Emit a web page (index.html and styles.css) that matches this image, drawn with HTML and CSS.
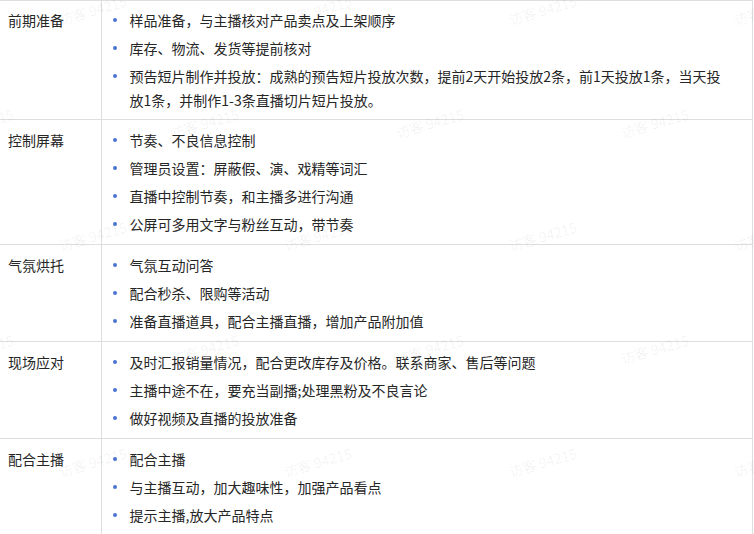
FILE: index.html
```html
<!DOCTYPE html>
<html lang="zh-CN">
<head>
  <meta charset="UTF-8" />
  <meta name="viewport" content="width=device-width, initial-scale=1.0"/>
  <title>直播分工</title>
  <link rel="stylesheet" href="styles.css">
</head>
<body>

  <div class="page">
    <table class="duty-table">
      <colgroup>
        <col class="col-label">
        <col>
      </colgroup>
      <tr class="first">
        <td class="label">前期准备</td>
        <td>
          <ul class="points">
            <li>样品准备，与主播核对产品卖点及上架顺序</li>
            <li>库存、物流、发货等提前核对</li>
            <li>预告短片制作并投放：成熟的预告短片投放次数，提前2天开始投放2条，前1天投放1条，当天投放1条，并制作1-3条直播切片短片投放。</li>
          </ul>
        </td>
      </tr>
      <tr>
        <td class="label">控制屏幕</td>
        <td>
          <ul class="points">
            <li>节奏、不良信息控制</li>
            <li>管理员设置：屏蔽假、演、戏精等词汇</li>
            <li>直播中控制节奏，和主播多进行沟通</li>
            <li>公屏可多用文字与粉丝互动，带节奏</li>
          </ul>
        </td>
      </tr>
      <tr>
        <td class="label">气氛烘托</td>
        <td>
          <ul class="points">
            <li>气氛互动问答</li>
            <li>配合秒杀、限购等活动</li>
            <li>准备直播道具，配合主播直播，增加产品附加值</li>
          </ul>
        </td>
      </tr>
      <tr>
        <td class="label">现场应对</td>
        <td>
          <ul class="points">
            <li>及时汇报销量情况，配合更改库存及价格。联系商家、售后等问题</li>
            <li>主播中途不在，要充当副播;处理黑粉及不良言论</li>
            <li>做好视频及直播的投放准备</li>
          </ul>
        </td>
      </tr>
      <tr>
        <td class="label">配合主播</td>
        <td>
          <ul class="points">
            <li>配合主播</li>
            <li>与主播互动，加大趣味性，加强产品看点</li>
            <li>提示主播,放大产品特点</li>
          </ul>
        </td>
      </tr>
    </table>

    <!-- watermark -->
    <div class="watermark">
      <div class="wm-row">
        <span>访客 94215</span><span>访客 94215</span><span>访客 94215</span><span>访客 94215</span>
      </div>
      <div class="wm-row shifted">
        <span>访客 94215</span><span>访客 94215</span><span>访客 94215</span><span>访客 94215</span>
      </div>
      <div class="wm-row">
        <span>访客 94215</span><span>访客 94215</span><span>访客 94215</span><span>访客 94215</span>
      </div>
      <div class="wm-row shifted">
        <span>访客 94215</span><span>访客 94215</span><span>访客 94215</span><span>访客 94215</span>
      </div>
      <div class="wm-row">
        <span>访客 94215</span><span>访客 94215</span><span>访客 94215</span><span>访客 94215</span>
      </div>
    </div>
  </div>

</body>
</html>
```

FILE: styles.css
```css
* {
  box-sizing: border-box;
}

body {
  margin: 0;
  font-family: "Noto Sans CJK SC", "Liberation Sans", sans-serif;
  font-size: 14px;
  color: #262626;
  background: #fff;
}

.page {
  position: relative;
  width: 754px;
  height: 534px;
  overflow: hidden;
}

.duty-table {
  width: 753px;
  border-collapse: collapse;
  table-layout: fixed;
}

.col-label {
  width: 101px;
}

.duty-table td {
  border-top: 1px solid #dedede;
  border-bottom: 1px solid #dedede;
  border-right: 1px solid #dedede;
  vertical-align: top;
  padding: 8px 24px 8px 8px;
  line-height: 24px;
}

.duty-table td.label {
  padding-right: 8px;
}

.duty-table tr.first td {
  padding-top: 7px;
  padding-bottom: 7px;
}

.points {
  list-style: none;
  margin: 0;
  padding: 0;
}

.points li {
  position: relative;
  padding-left: 20px;
  margin-bottom: 4px;
}

.points li:last-child {
  margin-bottom: 0;
}

.points li::before {
  content: "";
  position: absolute;
  left: 3px;
  top: 10px;
  width: 4px;
  height: 4px;
  border-radius: 50%;
  background: #4a74cf;
}

/* watermark */
.watermark {
  position: absolute;
  top: -47px;
  left: 0;
  right: 0;
  bottom: 0;
  pointer-events: none;
}

.wm-row {
  display: flex;
  height: 113px;
  margin-left: -20px;
}

.wm-row.shifted {
  margin-left: -133px;
}

.wm-row span {
  flex: 0 0 225px;
  display: flex;
  align-items: center;
  justify-content: center;
  font-size: 14px;
  color: rgba(0, 0, 0, 0.06);
  transform: rotate(-16deg);
  white-space: nowrap;
}
```
